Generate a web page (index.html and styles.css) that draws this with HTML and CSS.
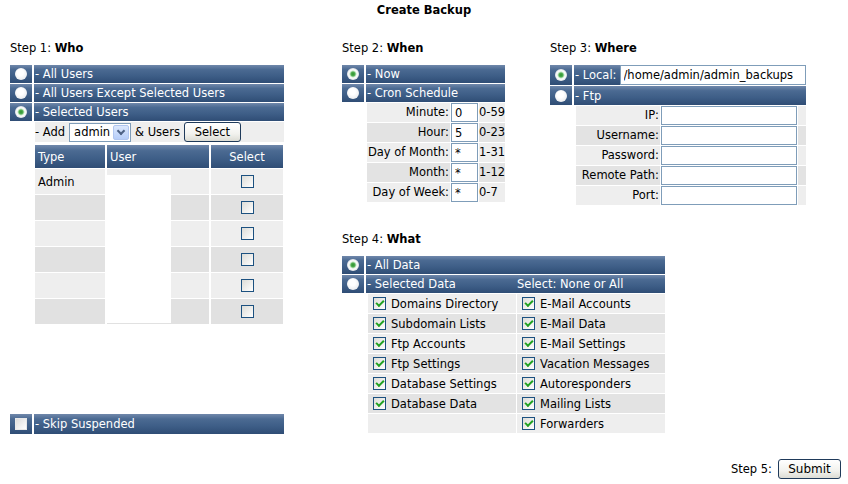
FILE: index.html
```html
<!DOCTYPE html>
<html lang="en">
  <head>
    <meta charset="UTF-8" />
    <meta name="viewport" content="width=device-width, initial-scale=1.0" />
    <title>Create Backup</title>
    <link rel="stylesheet" href="styles.css">
  </head>
  <body>
    <h1>Create Backup</h1>
    <form class="backup">
      <section class="who">
        <h2>Step 1: <b>Who</b></h2>
        <div class="bar"><span class="tick"><span class="radio"></span></span><span class="label">- All Users</span></div>
        <div class="bar"><span class="tick"><span class="radio"></span></span><span class="label">- All Users Except Selected Users</span></div>
        <div class="bar"><span class="tick"><span class="radio on"></span></span><span class="label">- Selected Users</span></div>
        <div class="addrow">
          <span>- Add</span>
          <span class="dropdown">admin<span class="arrow"></span></span>
          <span>&amp; Users</span>
          <button type="button" class="btn">Select</button>
        </div>
        <div class="users">
          <div class="head">Type</div>
          <div class="head">User</div>
          <div class="head mid">Select</div>

          <div>Admin</div><div></div><div class="mid"><span class="check"></span></div>
          <div class="alt"></div><div class="alt"></div><div class="alt mid"><span class="check"></span></div>
          <div></div><div></div><div class="mid"><span class="check"></span></div>
          <div class="alt"></div><div class="alt"></div><div class="alt mid"><span class="check"></span></div>
          <div></div><div></div><div class="mid"><span class="check"></span></div>
          <div class="alt"></div><div class="alt"></div><div class="alt mid"><span class="check"></span></div>

          <div class="userlist"></div>
        </div>
        <div class="bar skip"><span class="tick"><span class="box"></span></span><span class="label">- Skip Suspended</span></div>
      </section>

      <section class="when">
        <h2>Step 2: <b>When</b></h2>
        <div class="bar"><span class="tick"><span class="radio on"></span></span><span class="label">- Now</span></div>
        <div class="bar"><span class="tick"><span class="radio"></span></span><span class="label">- Cron Schedule</span></div>
        <div class="cron">
          <label>Minute:</label><input type="text" value="0"><span>0-59</span>
          <label class="alt">Hour:</label><input type="text" value="5"><span class="alt">0-23</span>
          <label>Day of Month:</label><input type="text" value="*"><span>1-31</span>
          <label class="alt">Month:</label><input type="text" value="*"><span class="alt">1-12</span>
          <label>Day of Week:</label><input type="text" value="*"><span>0-7</span>
        </div>
      </section>

      <section class="where">
        <h2>Step 3: <b>Where</b></h2>
        <div class="bar tall"><span class="tick"><span class="radio on"></span></span><span class="label">- Local: <input type="text" value="/home/admin/admin_backups"></span></div>
        <div class="bar ftpbar"><span class="tick"><span class="radio"></span></span><span class="label">- Ftp</span></div>
        <div class="ftp">
          <label>IP:</label><input type="text"><span></span>
          <label class="alt">Username:</label><input type="text"><span class="alt"></span>
          <label>Password:</label><input type="text"><span></span>
          <label class="alt">Remote Path:</label><input type="text"><span class="alt"></span>
          <label>Port:</label><input type="text"><span></span>
        </div>
      </section>

      <section class="what">
        <h2>Step 4: <b>What</b></h2>
        <div class="bar"><span class="tick"><span class="radio on"></span></span><span class="label">- All Data</span></div>
        <div class="bar"><span class="tick"><span class="radio"></span></span><span class="label"><span class="first">- Selected Data</span>Select: None or All</span></div>
        <div class="items">
          <div><span class="check on"></span>Domains Directory</div>
          <div><span class="check on"></span>E-Mail Accounts</div>
          <div class="alt"><span class="check on"></span>Subdomain Lists</div>
          <div class="alt"><span class="check on"></span>E-Mail Data</div>
          <div><span class="check on"></span>Ftp Accounts</div>
          <div><span class="check on"></span>E-Mail Settings</div>
          <div class="alt"><span class="check on"></span>Ftp Settings</div>
          <div class="alt"><span class="check on"></span>Vacation Messages</div>
          <div><span class="check on"></span>Database Settings</div>
          <div><span class="check on"></span>Autoresponders</div>
          <div class="alt"><span class="check on"></span>Database Data</div>
          <div class="alt"><span class="check on"></span>Mailing Lists</div>
          <div></div>
          <div><span class="check on"></span>Forwarders</div>
        </div>
      </section>
    </form>
    <div class="submit">Step 5: <button type="button" class="btn">Submit</button></div>
  </body>
</html>
```

FILE: styles.css
```css
* {
  box-sizing: border-box;
}
body {
  margin: 0;
  font-family: "DejaVu Sans", Verdana, sans-serif;
  font-size: 11.5px;
  color: #000;
  background-color: #fff;
}
h1 {
  margin: 3px 0 0;
  font-size: 11.5px;
  line-height: 14px;
  text-align: center;
}
h2 {
  margin: 0 0 10px;
  font-size: 11.5px;
  font-weight: normal;
  line-height: 14px;
}

.backup {
  display: grid;
  grid-template-columns: 274px 58px 163px 45px 256px;
  margin: 24px 0 0 10px;
}
.who {
  grid-column: 1;
  grid-row: 1 / 3;
  display: flex;
  flex-direction: column;
}
.when {
  grid-column: 3;
  grid-row: 1;
}
.where {
  grid-column: 5;
  grid-row: 1;
}
.what {
  grid-column: 3 / 6;
  grid-row: 2;
  width: 323px;
  padding: 27px 0 1px;
}

/* blue title bars */
.bar {
  display: flex;
  gap: 2px;
  height: 18px;
  margin-bottom: 1px;
}
.bar.tall {
  height: 20px;
}
.bar.ftpbar {
  height: 19px;
}
.tick,
.bar .label,
.users .head {
  background: linear-gradient(#7088ab, #4b6a92 25%, #3e5e87 60%, #2f4d75);
}
.tick {
  flex: none;
  width: 22px;
  display: flex;
  align-items: center;
  justify-content: center;
}
.bar .label {
  flex: 1;
  display: flex;
  align-items: center;
  padding-left: 1px;
  color: #fff;
  white-space: nowrap;
}
.bar .label input {
  flex: 1;
  align-self: stretch;
  margin-left: 3px;
  height: auto;
}
.bar .first {
  width: 150px;
}
.skip {
  margin-top: auto;
  margin-bottom: 0;
  height: 20px;
}

.radio {
  width: 12px;
  height: 12px;
  border-radius: 50%;
  background: radial-gradient(circle at 45% 40%, #ffffff 30%, #dfe2e6 100%);
}
.radio.on {
  background: radial-gradient(circle, #2f8f2f 0, #4fae4f 2px, #bfe3bf 3px, #ffffff 4px, #dfe2e6 6px);
}
.box {
  width: 12px;
  height: 12px;
  background: linear-gradient(135deg, #dcdcdc, #ffffff);
  border: 1px solid #e8e8e8;
}

.check {
  display: inline-block;
  position: relative;
  flex: none;
  width: 13px;
  height: 13px;
  border: 1px solid #1c5180;
  background: linear-gradient(135deg, #dcdcd7, #ffffff);
  vertical-align: middle;
}
.check.on::after {
  content: "";
  position: absolute;
  left: 2px;
  top: 2px;
  width: 6px;
  height: 3px;
  border-left: 2px solid #21a121;
  border-bottom: 2px solid #21a121;
  transform: rotate(-45deg);
}

/* step 1 */
.addrow {
  display: flex;
  align-items: center;
  gap: 4px;
  height: 20px;
  margin-left: 25px;
  background-color: #eeeeee;
}
.dropdown {
  display: flex;
  align-items: center;
  justify-content: space-between;
  width: 62px;
  height: 19px;
  padding: 0 1px 0 4px;
  border: 1px solid #7f9db9;
  background-color: #fff;
}
.arrow {
  position: relative;
  width: 16px;
  height: 15px;
  border: 1px solid #b1c6f0;
  border-radius: 2px;
  background: linear-gradient(#dce8fd, #b6cdf9);
}
.arrow::after {
  content: "";
  position: absolute;
  left: 4px;
  top: 2px;
  width: 4px;
  height: 4px;
  border-right: 2px solid #4d6185;
  border-bottom: 2px solid #4d6185;
  transform: rotate(45deg);
}
.btn {
  height: 20px;
  padding: 0;
  font-family: inherit;
  font-size: 11.5px;
  color: #000;
  border: 1px solid #1f3a5a;
  border-radius: 3px;
  background: linear-gradient(#ffffff, #f2f2ee 60%, #dcdcd4);
}
.addrow .btn {
  width: 57px;
}

.users {
  position: relative;
  display: grid;
  grid-template-columns: 70px 102px 72px;
  grid-template-rows: 23px repeat(6, 25px);
  gap: 1px 2px;
  margin: 3px 0 0 25px;
}
.users > div {
  display: flex;
  align-items: center;
  padding-left: 3px;
  background-color: #eeeeee;
}
.users > div.alt {
  background-color: #e1e1e1;
}
.users > .head {
  color: #fff;
}
.users > .mid {
  justify-content: center;
  padding-left: 0;
}
/* empty user list box drawn over the rows */
.users > .userlist {
  position: absolute;
  left: 72px;
  top: 30px;
  width: 64px;
  height: 148px;
  background-color: #fff;
}

/* step 2 & 3 */
input[type="text"] {
  height: 19px;
  margin: 0;
  padding: 0 3px;
  font-family: inherit;
  font-size: 11.5px;
  border: 1px solid #7f9db9;
  background-color: #fff;
  color: #000;
}
.cron,
.ftp {
  display: grid;
  grid-auto-rows: 19px;
  gap: 1px;
  margin-left: 25px;
}
.cron {
  grid-template-columns: 83px 27px 1fr;
}
.ftp {
  grid-template-columns: 84px 136px 1fr;
  margin-left: 26px;
}
.cron input,
.ftp input {
  width: 100%;
}
.cron label,
.ftp label {
  text-align: right;
  line-height: 19px;
  padding-right: 1px;
  white-space: nowrap;
  background-color: #eeeeee;
}
.cron span,
.ftp span {
  line-height: 19px;
  white-space: nowrap;
  background-color: #eeeeee;
}
.cron .alt,
.ftp .alt {
  background-color: #e3e3e3;
}

/* step 4 */
.items {
  display: grid;
  grid-template-columns: 148px 1fr;
  grid-auto-rows: 19px;
  gap: 1px;
  margin-left: 26px;
}
.items > div {
  display: flex;
  align-items: center;
  gap: 5px;
  padding-left: 5px;
  background-color: #eeeeee;
}
.items > div.alt {
  background-color: #e3e3e3;
}

/* step 5 */
.submit {
  display: flex;
  justify-content: flex-end;
  align-items: center;
  gap: 6px;
  margin-top: 25px;
  padding-right: 7px;
}
.submit .btn {
  width: 63px;
  font-size: 12px;
}
```
